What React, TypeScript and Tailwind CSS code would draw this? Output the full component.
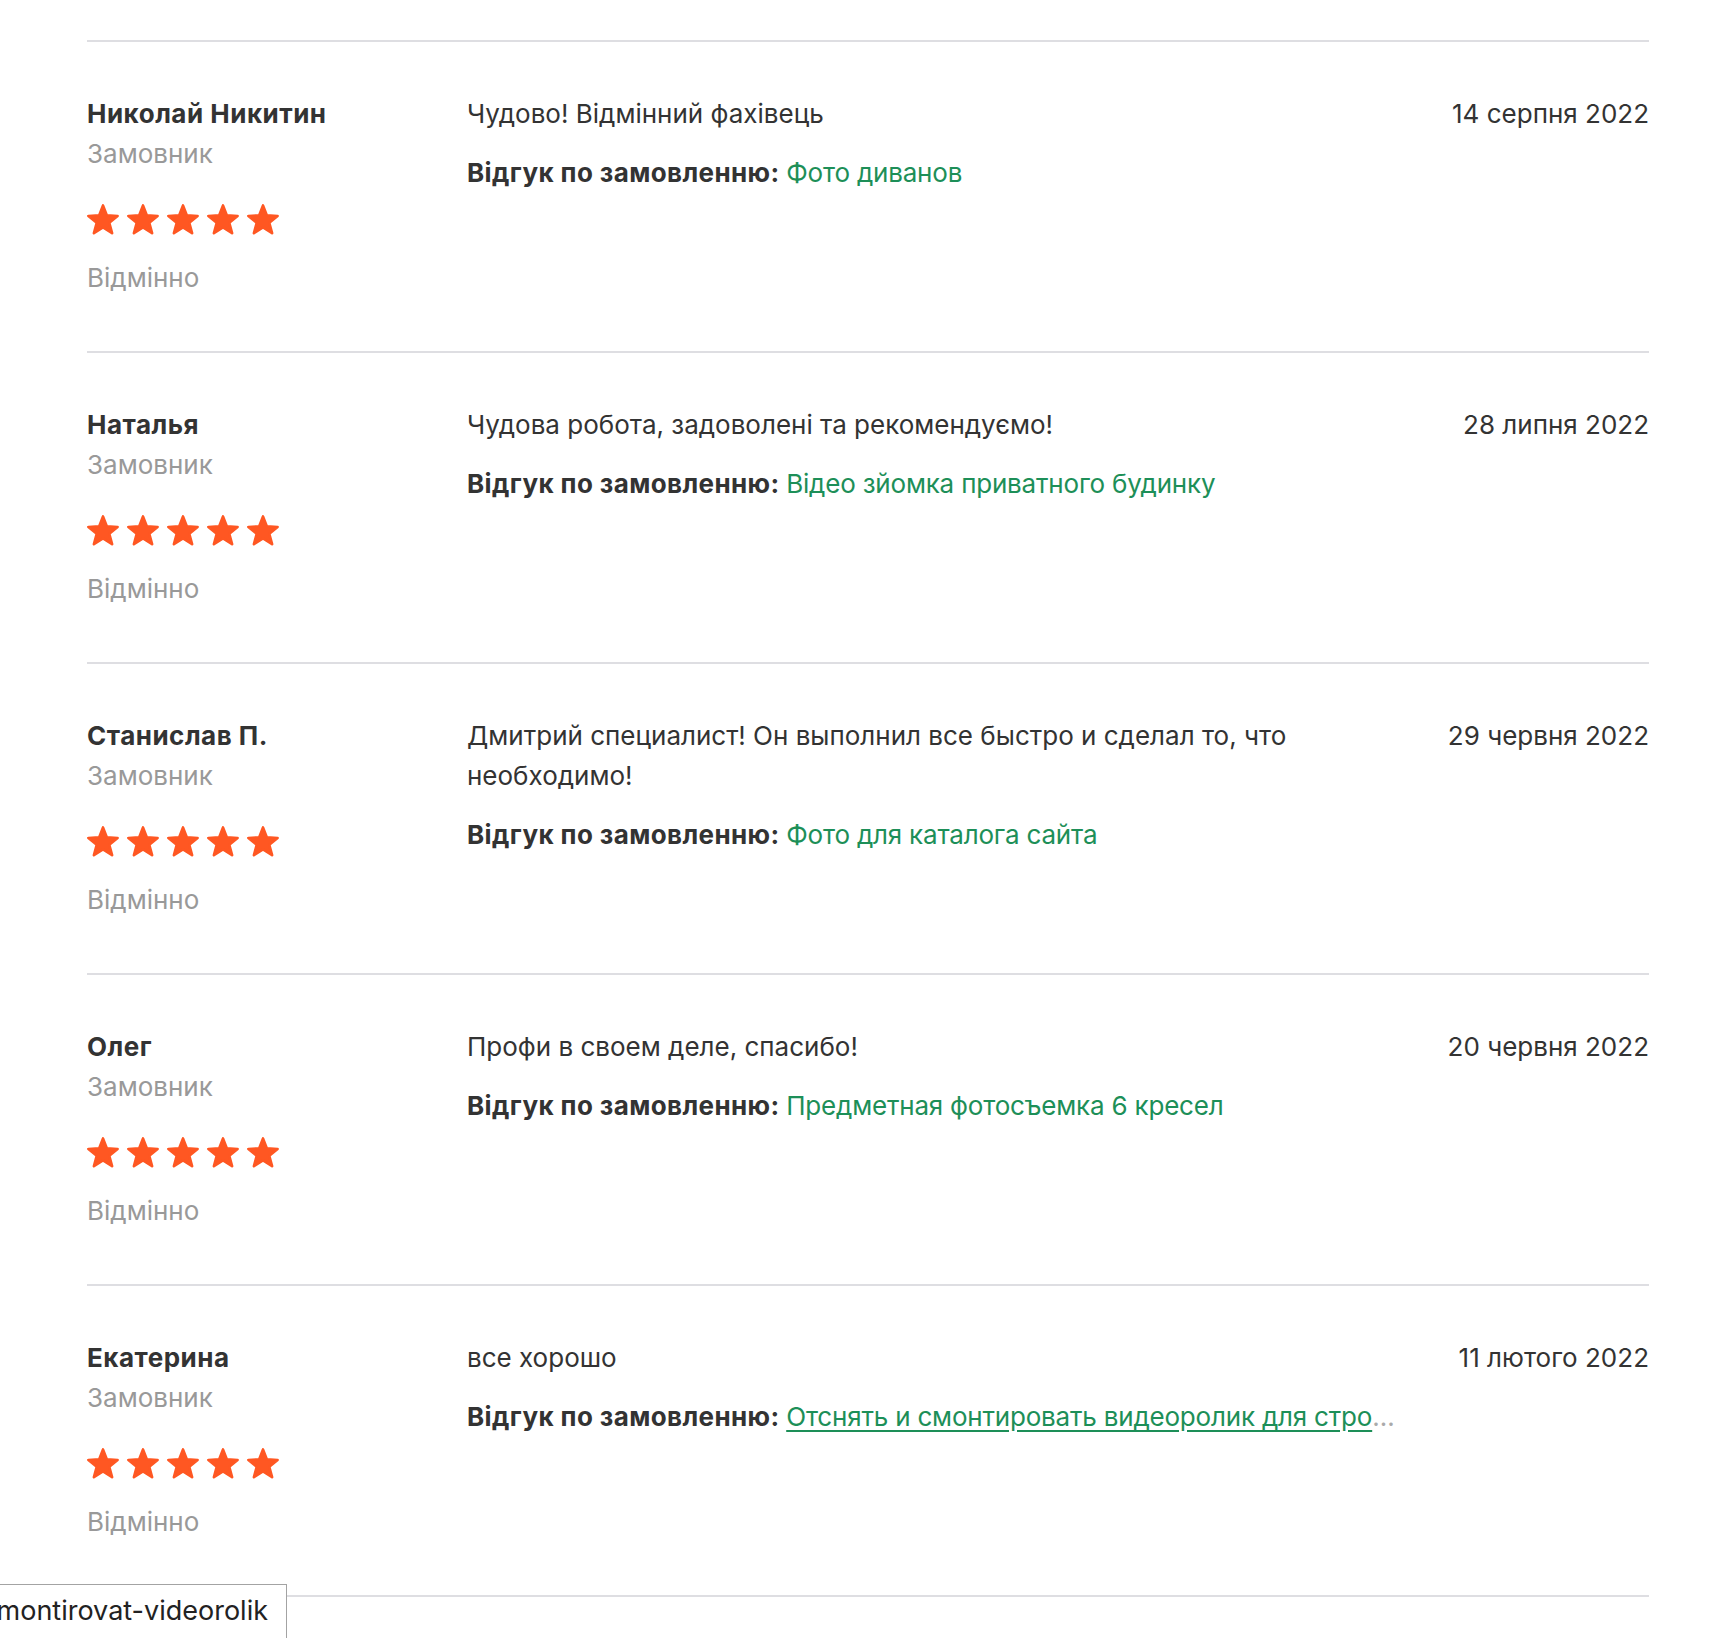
import React from "react";

type Review = {
  name: string;
  comment: string;
  date: string;
  order: string;
  truncated?: boolean;
};

const reviews: Review[] = [
  { name: "Николай Никитин", comment: "Чудово! Відмінний фахівець", date: "14 серпня 2022", order: "Фото диванов" },
  { name: "Наталья", comment: "Чудова робота, задоволені та рекомендуємо!", date: "28 липня 2022", order: "Відео зйомка приватного будинку" },
  { name: "Станислав П.", comment: "Дмитрий специалист! Он выполнил все быстро и сделал то, что необходимо!", date: "29 червня 2022", order: "Фото для каталога сайта" },
  { name: "Олег", comment: "Профи в своем деле, спасибо!", date: "20 червня 2022", order: "Предметная фотосъемка 6 кресел" },
  { name: "Екатерина", comment: "все хорошо", date: "11 лютого 2022", order: "Отснять и смонтировать видеоролик для стро", truncated: true },
];

function Star() {
  return (
    <svg width="32" height="31" viewBox="0 0 32 31" className="shrink-0">
      <path
        d="M16 1.4L19.89 11.41L30.6 11.95L22.3 18.82L25.1 29.2L16 23.39L6.9 29.2L9.7 18.82L1.4 11.95L12.11 11.41Z"
        fill="#ff5722"
        stroke="#ff5722"
        strokeWidth="2.6"
        strokeLinejoin="round"
      />
    </svg>
  );
}

function ReviewRow({ r }: { r: Review }) {
  return (
    <div className="flex h-[311px] border-b-2 border-[#dedee2] pt-[52px]">
      <div className="w-[380px] shrink-0">
        <div className="text-[26px] leading-[40px] font-bold tracking-[0.5px] text-[#333]">{r.name}</div>
        <div className="text-[26px] leading-[40px] text-[#999]">Замовник</div>
        <div className="flex gap-[8px] mt-[30px]">
          {[0, 1, 2, 3, 4].map((i) => (
            <Star key={i} />
          ))}
        </div>
        <div className="text-[26px] leading-[40px] text-[#999] mt-[23px]">Відмінно</div>
      </div>
      <div className="w-[850px] shrink-0">
        <p className="text-[26px] leading-[40px] text-[#333]">{r.comment}</p>
        <p className="text-[26px] leading-[40px] text-[#333] mt-[19px] whitespace-nowrap">
          <span className="font-bold tracking-[0.4px]">Відгук по замовленню: </span>
          {r.truncated ? (
            <>
              <a className="text-[#1d8f58] underline underline-offset-4 tracking-[-0.2px]">{r.order}</a>
              <span className="text-[#aaa]">...</span>
            </>
          ) : (
            <a className="text-[#1d8f58] tracking-[-0.2px]">{r.order}</a>
          )}
        </p>
      </div>
      <div className="flex-1 text-right text-[26px] leading-[40px] text-[#333] whitespace-nowrap">{r.date}</div>
    </div>
  );
}

export default function App() {
  return (
    <div
      className="relative min-h-[1638px] bg-white overflow-hidden"
      style={{ fontFamily: "Inter, 'Noto Sans', sans-serif" }}
    >
      <div className="ml-[87px] mr-[65px] pt-[40px]">
        <div className="border-t-2 border-[#dedee2]">
          {reviews.map((r) => (
            <ReviewRow key={r.name} r={r} />
          ))}
        </div>
      </div>

      <div className="absolute left-0 bottom-0 w-[287px] h-[54px] bg-white border-t border-r border-[#a3a3a3] overflow-hidden flex justify-end items-center pr-[18px]">
        <span className="whitespace-nowrap text-[27px] text-[#222]">smontirovat-videorolik</span>
      </div>
    </div>
  );
}
